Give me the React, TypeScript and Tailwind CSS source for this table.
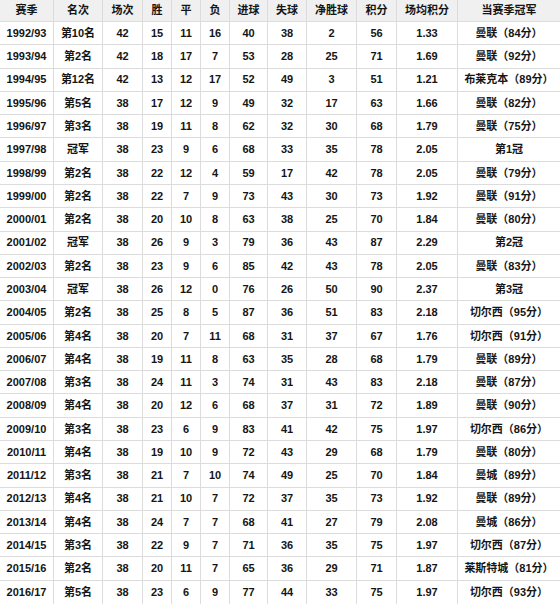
const headers = ["赛季", "名次", "场次", "胜", "平", "负", "进球", "失球", "净胜球", "积分", "场均积分", "当赛季冠军"];

const rows: string[][] = [
    ["1992/93", "第10名", "42", "15", "11", "16", "40", "38", "2", "56", "1.33", "曼联（84分）"],
    ["1993/94", "第2名", "42", "18", "17", "7", "53", "28", "25", "71", "1.69", "曼联（92分）"],
    ["1994/95", "第12名", "42", "13", "12", "17", "52", "49", "3", "51", "1.21", "布莱克本（89分）"],
    ["1995/96", "第5名", "38", "17", "12", "9", "49", "32", "17", "63", "1.66", "曼联（82分）"],
    ["1996/97", "第3名", "38", "19", "11", "8", "62", "32", "30", "68", "1.79", "曼联（75分）"],
    ["1997/98", "冠军", "38", "23", "9", "6", "68", "33", "35", "78", "2.05", "第1冠"],
    ["1998/99", "第2名", "38", "22", "12", "4", "59", "17", "42", "78", "2.05", "曼联（79分）"],
    ["1999/00", "第2名", "38", "22", "7", "9", "73", "43", "30", "73", "1.92", "曼联（91分）"],
    ["2000/01", "第2名", "38", "20", "10", "8", "63", "38", "25", "70", "1.84", "曼联（80分）"],
    ["2001/02", "冠军", "38", "26", "9", "3", "79", "36", "43", "87", "2.29", "第2冠"],
    ["2002/03", "第2名", "38", "23", "9", "6", "85", "42", "43", "78", "2.05", "曼联（83分）"],
    ["2003/04", "冠军", "38", "26", "12", "0", "76", "26", "50", "90", "2.37", "第3冠"],
    ["2004/05", "第2名", "38", "25", "8", "5", "87", "36", "51", "83", "2.18", "切尔西（95分）"],
    ["2005/06", "第4名", "38", "20", "7", "11", "68", "31", "37", "67", "1.76", "切尔西（91分）"],
    ["2006/07", "第4名", "38", "19", "11", "8", "63", "35", "28", "68", "1.79", "曼联（89分）"],
    ["2007/08", "第3名", "38", "24", "11", "3", "74", "31", "43", "83", "2.18", "曼联（87分）"],
    ["2008/09", "第4名", "38", "20", "12", "6", "68", "37", "31", "72", "1.89", "曼联（90分）"],
    ["2009/10", "第3名", "38", "23", "6", "9", "83", "41", "42", "75", "1.97", "切尔西（86分）"],
    ["2010/11", "第4名", "38", "19", "10", "9", "72", "43", "29", "68", "1.79", "曼联（80分）"],
    ["2011/12", "第3名", "38", "21", "7", "10", "74", "49", "25", "70", "1.84", "曼城（89分）"],
    ["2012/13", "第4名", "38", "21", "10", "7", "72", "37", "35", "73", "1.92", "曼联（89分）"],
    ["2013/14", "第4名", "38", "24", "7", "7", "68", "41", "27", "79", "2.08", "曼城（86分）"],
    ["2014/15", "第3名", "38", "22", "9", "7", "71", "36", "35", "75", "1.97", "切尔西（87分）"],
    ["2015/16", "第2名", "38", "20", "11", "7", "65", "36", "29", "71", "1.87", "莱斯特城（81分）"],
    ["2016/17", "第5名", "38", "23", "6", "9", "77", "44", "33", "75", "1.97", "切尔西（93分）"],
];

function Cell({ text, last, bottom, head }: { text: string; last: boolean; bottom: boolean; head?: boolean }) {
    return (
        <div
            className={
                "flex items-center justify-center whitespace-nowrap border-[#dcdcdc] " +
                (last ? "" : "border-r ") +
                (bottom ? "" : "border-b ") +
                (head ? "bg-[#f0f0f0]" : "bg-white")
            }
        >
            {text}
        </div>
    );
}

export default function App() {
    return (
        <div
            className="grid h-[604px] w-[560px] grid-cols-[54px_49px_40px_29px_29px_29px_38px_39px_50px_40px_61px_102px] grid-rows-[22px_repeat(25,minmax(0,1fr))] bg-white text-[11px] font-bold text-[#151515]"
            style={{ fontFamily: '"Liberation Sans", "Noto Sans CJK SC", sans-serif' }}
        >
            {headers.map((h, i) => (
                <Cell key={h} text={h} last={i === headers.length - 1} bottom={false} head />
            ))}
            {rows.map((row, r) =>
                row.map((v, c) => (
                    <Cell key={r + "-" + c} text={v} last={c === row.length - 1} bottom={r === rows.length - 1} />
                ))
            )}
        </div>
    );
}
